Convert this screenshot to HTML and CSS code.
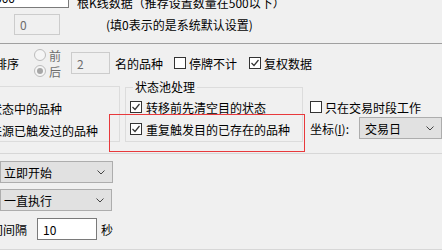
FILE: index.html
```html
<!DOCTYPE html>
<html lang="zh-CN">
<head>
  <meta charset="UTF-8" />
  <title>条件选股设置</title>
  <link rel="stylesheet" href="styles.css">
</head>
<body>
  <div class="row r1">
    <span class="edit top-edit">500</span>
    <span class="top-txt">根K线数据（推荐设置数量在500以下）</span>
  </div>
  <div class="row r2">
    <span class="edit dis zero">0</span>
    <span class="hint">(填0表示的是系统默认设置)</span>
  </div>
  <div class="sep dark"></div>

  <div class="row r3">
    <span class="sort">排序</span>
    <div class="radios">
      <label class="radio"><span class="dot"></span>前</label>
      <label class="radio on"><span class="dot"></span>后</label>
    </div>
    <span class="edit dis topn">2</span>
    <span class="after-n">名的品种</span>
    <label class="check halt"><span class="box"></span>停牌不计</label>
    <label class="check adj"><span class="box"><svg viewBox="0 0 10 10"><polyline points="1.5,5 4,7.5 8.5,2"/></svg></span>复权数据</label>
  </div>

  <div class="row r4">
    <div class="group src">
      <div class="line">状态中的品种</div>
      <div class="line">来源已触发过的品种</div>
    </div>
    <div class="group pool">
      <span class="title">状态池处理</span>
      <label class="check line"><span class="box"><svg viewBox="0 0 10 10"><polyline points="1.5,5 4,7.5 8.5,2"/></svg></span>转移前先清空目的状态</label>
      <label class="check line"><span class="box"><svg viewBox="0 0 10 10"><polyline points="1.5,5 4,7.5 8.5,2"/></svg></span>重复触发目的已存在的品种</label>
    </div>
    <div class="side">
      <label class="check work"><span class="box"></span>只在交易时段工作</label>
      <div class="coord">
        <span>坐标(<u>I</u>):</span>
        <div class="combo axis">交易日<svg class="chev" viewBox="0 0 8 5"><polyline points="0.5,0.5 4,4 7.5,0.5"/></svg></div>
      </div>
    </div>
  </div>
  <div class="sep light"></div>

  <div class="combo start">立即开始<svg class="chev" viewBox="0 0 8 5"><polyline points="0.5,0.5 4,4 7.5,0.5"/></svg></div>
  <div class="combo run">一直执行<svg class="chev" viewBox="0 0 8 5"><polyline points="0.5,0.5 4,4 7.5,0.5"/></svg></div>
  <div class="row r7">
    <span class="gap-lbl">时间间隔</span>
    <span class="edit secs">10</span>
    <span class="unit">秒</span>
  </div>
  <div class="sep light bottom"></div>

  <div class="mark"></div>
</body>
</html>
```

FILE: styles.css
```css
body {
  margin: 0;
  width: 442px;
  height: 250px;
  overflow: hidden;
  background: #f0f0f0;
  font-family: "Noto Sans CJK SC", "Noto Sans", sans-serif;
  font-size: 12px;
  color: #000;
}
.row {
  display: flex;
  align-items: center;
  white-space: nowrap;
}
.row > *, .coord > * {
  flex-shrink: 0;
}
.edit {
  box-sizing: border-box;
  display: flex;
  align-items: center;
  height: 22px;
  padding-left: 5px;
  background: #fff;
  border: 1px solid #7a7a7a;
}
.edit.dis {
  background: #f0f0f0;
  border-color: #cccccc;
  color: #6d6d6d;
}

.r1 { height: 22px; margin-top: -14px; }
.top-edit { width: 80px; margin-left: -11px; }
.top-txt { align-self: flex-end; margin-left: 8px; line-height: 16px; margin-bottom: -3px; }

.r2 { height: 21px; margin-top: 6px; }
.zero { width: 46px; height: 21px; margin-left: 14px; }
.hint { margin-left: 46px; }

.sep { height: 1px; }
.sep.dark { background: #a0a0a0; margin-top: 8px; }
.sep.light { background: #d7d7d7; margin-top: 11px; }
.sep.bottom { margin-top: 9px; }

.r3 { height: 30px; margin-top: 4px; }
.sort { margin-left: -5px; }
.radios {
  display: flex;
  flex-direction: column;
  gap: 1px;
  margin-left: 15px;
  color: #6d6d6d;
}
.radio {
  display: flex;
  align-items: center;
  gap: 3px;
  height: 15px;
}
.dot {
  box-sizing: border-box;
  width: 12px;
  height: 12px;
  border: 1px solid #bcbcbc;
  border-radius: 50%;
  background: #f5f5f5;
  display: flex;
  align-items: center;
  justify-content: center;
}
.radio.on .dot::after {
  content: "";
  width: 6px;
  height: 6px;
  border-radius: 50%;
  background: #a6a6a6;
}
.topn { width: 39px; margin-left: 10px; }
.after-n { margin-left: 5px; }

.check {
  display: flex;
  align-items: center;
  gap: 4px;
}
.box {
  box-sizing: border-box;
  width: 12px;
  height: 12px;
  border: 1px solid #333;
  background: #fff;
  display: flex;
}
.box svg {
  width: 10px;
  height: 10px;
  fill: none;
  stroke: #333;
  stroke-width: 1.2;
}
.halt { margin-left: 11px; gap: 3px; }
.adj { margin-left: 12px; gap: 3px; }

.r4 { align-items: flex-start; height: 56px; margin-top: 8px; }
.group {
  box-sizing: border-box;
  border: 1px solid #dcdcdc;
  position: relative;
}
.group .line {
  height: 22px;
  display: flex;
  align-items: center;
}
.src {
  width: 141px;
  height: 56px;
  margin-left: -21px;
  padding: 10px 0 0 10px;
}
.pool {
  width: 178px;
  height: 55px;
  margin: 1px 0 0 5px;
  padding: 8px 0 0 4px;
}
.title {
  position: absolute;
  left: 7px;
  top: -9px;
  line-height: 16px;
  padding: 0 2px;
  background: #f0f0f0;
}
.side { margin: 11px 0 0 7px; }
.work { height: 20px; gap: 3px; }
.coord { display: flex; align-items: center; height: 22px; }

.combo {
  box-sizing: border-box;
  position: relative;
  display: flex;
  align-items: center;
  height: 22px;
  padding-left: 3px;
  background: #e1e1e1;
  border: 1px solid #adadad;
}
.chev {
  position: absolute;
  right: 7px;
  top: 8px;
  width: 8px;
  height: 5px;
  fill: none;
  stroke: #444;
  stroke-width: 1;
}
.axis { width: 83px; margin-left: 10px; padding-left: 5px; }
.start { width: 113px; margin-top: 7px; }
.run { width: 112px; margin-top: 6px; }

.r7 { height: 22px; margin-top: 7px; }
.gap-lbl { margin-left: -21px; }
.secs { width: 60px; margin-left: 10px; }
.unit { margin-left: 4px; }

.mark {
  position: absolute;
  left: 109px;
  top: 114px;
  width: 196px;
  height: 38px;
  box-sizing: border-box;
  border: 1px solid #e8393c;
}
```
